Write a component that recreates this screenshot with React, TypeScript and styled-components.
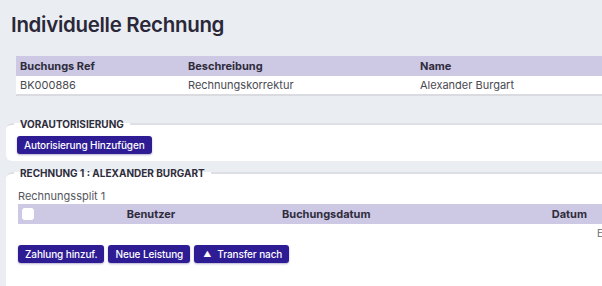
import styled, { createGlobalStyle } from "styled-components";

const Global = createGlobalStyle`
  body {
    margin: 0;
    background: #eaedf2;
    font-family: "Inter", "Liberation Sans", sans-serif;
    color: #3a3a44;
    overflow: hidden;
  }
`;

const Page = styled.div`
  width: 760px;
  padding: 12px 0 0 0;
`;

const Title = styled.h1`
  margin: 0 0 18px 11px;
  font-size: 20.5px;
  font-weight: 600;
  color: #2a2838;
  letter-spacing: -0.3px;
  line-height: 26px;
`;

const Grid = styled.div<{ $cols: string }>`
  display: grid;
  grid-template-columns: ${(p) => p.$cols};
  align-items: center;
`;

const HeadRow = styled(Grid)`
  background: #cdc8e4;
  height: 20px;
`;

const BodyRow = styled(Grid)`
  background: #fff;
  height: 18px;
  border-bottom: 2px solid #d9dbe1;
`;

const HeadCell = styled.div<{ $align?: string; $indent?: number }>`
  font-size: 11px;
  font-weight: 700;
  color: #2f2d3c;
  padding: 0 4px 0 ${(p) => p.$indent ?? 4}px;
  text-align: ${(p) => p.$align || "left"};
`;

const Cell = styled.div`
  font-size: 11px;
  color: #4a4a52;
  padding-left: 4px;
`;

const TopTable = styled.div`
  margin: 0 0 22px 16px;
`;

const Fieldset = styled.fieldset`
  margin: 0 0 6px 6px;
  padding: 6px 0 7px 8px;
  border: none;
  border-top: 2px solid #dcdfe5;
  border-radius: 6px;
  background: #fff;
  min-width: 0;
`;

const Legend = styled.legend`
  padding: 0 6px;
  font-size: 10px;
  font-weight: 700;
  text-transform: uppercase;
  color: #2f2d3c;
  line-height: 12px;
`;

const Button = styled.button`
  font-family: inherit;
  background: #2e1c95;
  color: #fff;
  border: none;
  border-radius: 3px;
  font-size: 10px;
  font-weight: 500;
  height: 18px;
  padding: 0 7px;
  cursor: pointer;
  box-shadow: 0 1px 2px rgba(40, 30, 120, 0.35);
  letter-spacing: -0.1px;
`;

const Arrow = styled.span`
  font-size: 8px;
  margin-right: 6px;
  margin-left: 2px;
  vertical-align: 1px;
`;

const ButtonRow = styled.div<{ $top?: number; $bottom?: number; $left?: number }>`
  display: flex;
  gap: 4px;
  margin: ${(p) => p.$top ?? 0}px 0 ${(p) => p.$bottom ?? 0}px ${(p) => p.$left ?? 3}px;
`;

const SubTitle = styled.div`
  font-size: 11px;
  color: #55555e;
  margin: 4px 0 1px 4px;
`;

const SplitTable = styled.div`
  margin-left: 4px;
`;

const Check = styled.span`
  display: inline-block;
  width: 12px;
  height: 12px;
  background: #fff;
  border-radius: 3px;
  margin-left: 4px;
`;

const EmptyRow = styled.div`
  height: 20px;
  padding-left: 579px;
  font-size: 10px;
  color: #6a6a72;
  line-height: 18px;
`;

export default function App() {
  return (
    <Page>
      <Global />
      <Title>Individuelle Rechnung</Title>
      <TopTable>
        <HeadRow $cols="168px 232px 1fr">
          <HeadCell>Buchungs Ref</HeadCell>
          <HeadCell>Beschreibung</HeadCell>
          <HeadCell>Name</HeadCell>
        </HeadRow>
        <BodyRow $cols="168px 232px 1fr">
          <Cell>BK000886</Cell>
          <Cell>Rechnungskorrektur</Cell>
          <Cell>Alexander Burgart</Cell>
        </BodyRow>
      </TopTable>

      <Fieldset>
        <Legend>Vorautorisierung</Legend>
        <ButtonRow>
          <Button>Autorisierung Hinzufügen</Button>
        </ButtonRow>
      </Fieldset>

      <Fieldset>
        <Legend>Rechnung 1 : Alexander Burgart</Legend>
        <SubTitle>Rechnungssplit 1</SubTitle>
        <SplitTable>
          <HeadRow $cols="20px 226px 230px 97px 1fr">
            <Check />
            <HeadCell $align="center">Benutzer</HeadCell>
            <HeadCell $indent={18}>Buchungsdatum</HeadCell>
            <HeadCell $align="right">Datum</HeadCell>
            <HeadCell />
          </HeadRow>
          <EmptyRow>Einträge: 0</EmptyRow>
        </SplitTable>
        <ButtonRow $top={1} $bottom={30} $left={4}>
          <Button>Zahlung hinzuf.</Button>
          <Button>Neue Leistung</Button>
          <Button>
            <Arrow>▲</Arrow>Transfer nach
          </Button>
        </ButtonRow>
      </Fieldset>
    </Page>
  );
}
